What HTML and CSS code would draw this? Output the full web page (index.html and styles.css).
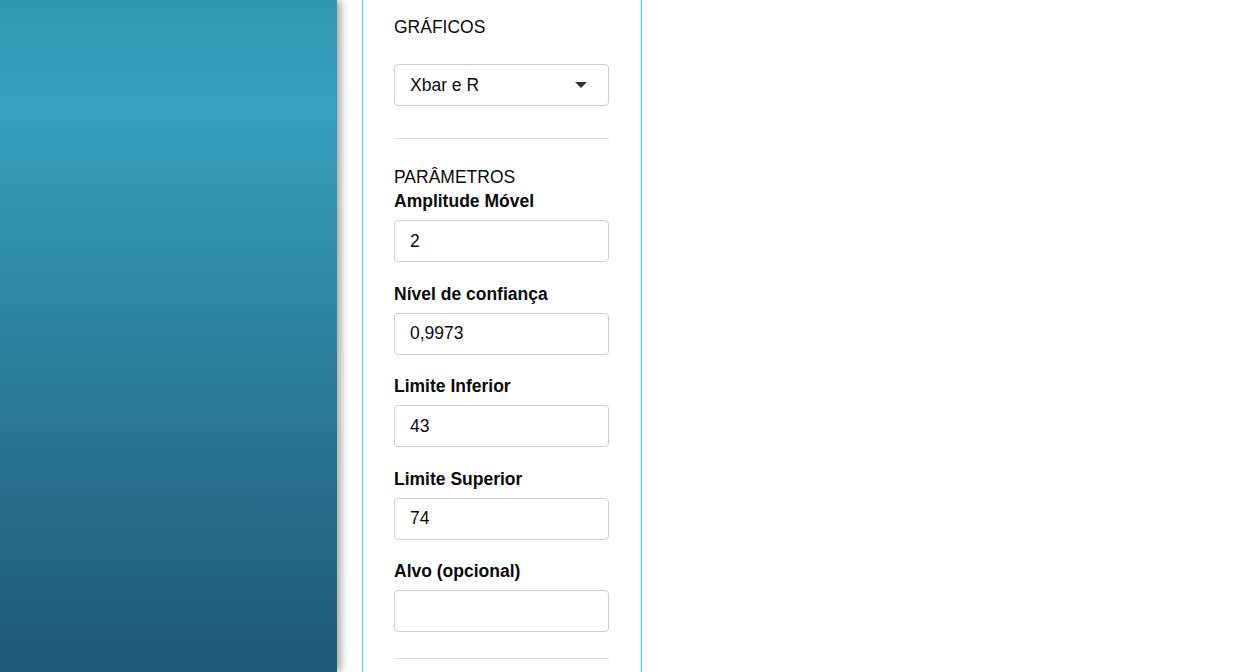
FILE: index.html
```html
<!DOCTYPE html>
<html lang="pt-BR">
<head>
    <meta charset="UTF-8">
    <meta name="viewport" content="width=device-width, initial-scale=1.0">
    <title>Controle Estatístico</title>
    <link rel="stylesheet" href="styles.css">
</head>
<body>
    <div class="page">
        <!-- Banner lateral -->
        <div class="hero"></div>

        <!-- Painel de configuração -->
        <div class="sidebar">
            <div class="section-title first">GRÁFICOS</div>
            <div class="select-box">
                <span>Xbar e R</span>
                <span class="caret"></span>
            </div>

            <hr class="divider">

            <div class="section-title">PARÂMETROS</div>

            <div class="field">
                <label>Amplitude Móvel</label>
                <input class="input" type="text" value="2">
            </div>
            <div class="field">
                <label>Nível de confiança</label>
                <input class="input" type="text" value="0,9973">
            </div>
            <div class="field">
                <label>Limite Inferior</label>
                <input class="input" type="text" value="43">
            </div>
            <div class="field">
                <label>Limite Superior</label>
                <input class="input" type="text" value="74">
            </div>
            <div class="field">
                <label>Alvo (opcional)</label>
                <input class="input" type="text" value="">
            </div>

            <hr class="divider">
        </div>
    </div>
</body>
</html>
```

FILE: styles.css
```css
body {
    font-family: "Liberation Sans", Arial, sans-serif;
    margin: 0;
    padding: 0;
    background: #fff;
    color: #0a0a0a;
    overflow: hidden;
}

.page {
    display: flex;
    height: 100vh;
}

.hero {
    width: 337px;
    flex-shrink: 0;
    background: linear-gradient(to bottom, #3298b1 0%, #37a1bd 16%, #3393ae 32%, #2d839f 50%, #27728f 70%, #216581 86%, #1e5977 100%);
    box-shadow: 4px 0 8px rgba(0, 0, 0, 0.35);
    position: relative;
    z-index: 1;
}

.sidebar {
    margin-left: 25px;
    width: 215px;
    padding: 0 32px 0 31px;
    border-left: 1px solid #2ee8d2;
    border-right: 1px solid #2ee8d2;
    flex-shrink: 0;
}

.section-title {
    font-size: 17.5px;
    line-height: 20px;
    margin-top: 28px;
    margin-bottom: 4px;
}

.section-title.first {
    margin-top: 17px;
    margin-bottom: 27px;
}

.select-box {
    height: 40px;
    border: 1px solid #ccc;
    border-radius: 4px;
    display: flex;
    align-items: center;
    justify-content: space-between;
    padding: 0 21px 0 15px;
    font-size: 17.5px;
}

.caret {
    width: 0;
    height: 0;
    border-left: 6px solid transparent;
    border-right: 6px solid transparent;
    border-top: 6px solid #333;
}

.divider {
    border: none;
    border-top: 1px solid #ddd;
    margin: 32px 0 0;
}

.field {
    display: flex;
    flex-direction: column;
    margin-bottom: 21.5px;
}

.field label {
    font-size: 17.5px;
    line-height: 20px;
    font-weight: bold;
    margin-bottom: 9px;
}

.input {
    box-sizing: border-box;
    height: 42px;
    width: 100%;
    border: 1px solid #ccc;
    border-radius: 4px;
    padding: 0 15px;
    font-family: "Liberation Sans", Arial, sans-serif;
    font-size: 17.5px;
    color: #0a0a0a;
    outline: none;
}

.field:last-of-type {
    margin-bottom: 0;
}

.field:last-of-type + .divider {
    margin-top: 26px;
}
```
